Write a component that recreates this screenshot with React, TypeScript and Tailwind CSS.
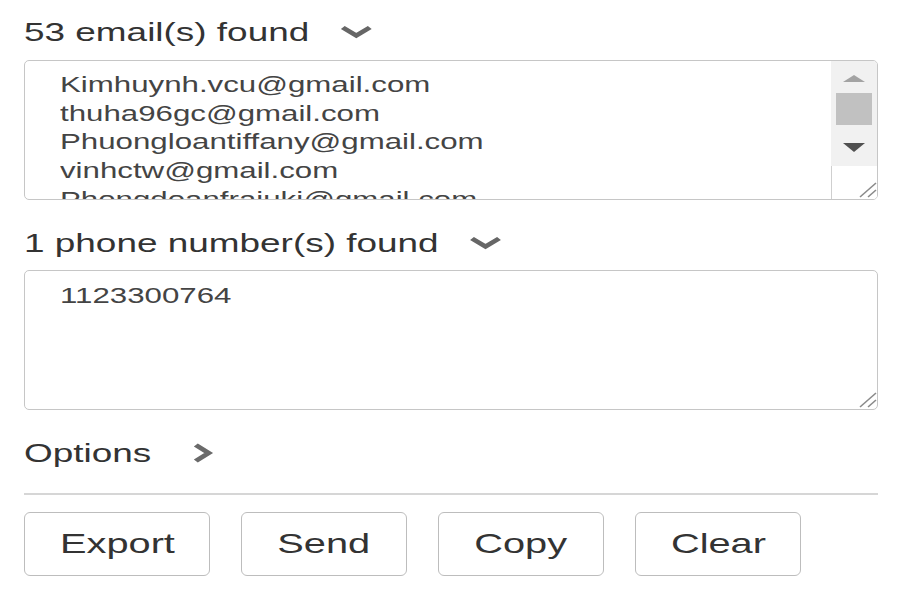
import React from "react";

const emails = [
  "Kimhuynh.vcu@gmail.com",
  "thuha96gc@gmail.com",
  "Phuongloantiffany@gmail.com",
  "vinhctw@gmail.com",
  "Phongdoanfraiuki@gmail.com",
];

function ChevronDown() {
  return (
    <svg width="24" height="14" viewBox="0 0 24 14" className="block">
      <polyline points="2.5,2.5 12,10.5 21.5,2.5" fill="none" stroke="#666" strokeWidth="4.2" strokeLinejoin="miter" />
    </svg>
  );
}

function ChevronRight() {
  return (
    <svg width="16" height="22" viewBox="0 0 16 22" className="block">
      <polyline points="3,3 12,11 3,19" fill="none" stroke="#6a6a6a" strokeWidth="4.2" strokeLinejoin="miter" />
    </svg>
  );
}

function Grip() {
  return (
    <svg width="22" height="20" viewBox="0 0 22 20" className="block">
      <line x1="21" y1="4" x2="5" y2="18" stroke="#8a8a8a" strokeWidth="1.6" />
      <line x1="21" y1="11" x2="13" y2="18" stroke="#8a8a8a" strokeWidth="1.6" />
    </svg>
  );
}

function Heading({ text }: { text: string }) {
  return (
    <div className="h-[36px] flex items-center">
      <span className="inline-flex items-center gap-[21px] origin-left scale-x-[1.42] text-[26px] leading-none text-[#333]">
        <span>{text}</span>
        <ChevronDown />
      </span>
    </div>
  );
}

function Line({ text }: { text: string }) {
  return (
    <div className="h-[28.7px] leading-[28.7px] whitespace-nowrap">
      <span className="inline-block origin-left scale-x-[1.42] text-[22px] text-[#444]">{text}</span>
    </div>
  );
}

function Btn({ label, w }: { label: string; w: string }) {
  return (
    <button className={`${w} h-[64px] border border-[#bdbdbd] rounded-[6px] bg-white flex items-center justify-center`}>
      <span className="inline-block origin-center scale-x-[1.42] text-[28px] leading-none text-[#333]">{label}</span>
    </button>
  );
}

export default function App() {
  return (
    <div className="w-[900px] h-[603px] bg-white overflow-hidden pl-[24px] pt-[14px] font-['Liberation_Sans',Arial,sans-serif]">
      <div className="w-[854px] flex flex-col">
        <Heading text="53 email(s) found" />

        <div className="mt-[10px] h-[140px] border border-[#c6c6c6] rounded-[5px] flex overflow-hidden">
          <div className="flex-1 pl-[35px] pt-[10px] overflow-hidden">
            {emails.map((e) => (
              <Line key={e} text={e} />
            ))}
          </div>
          <div className="w-[46px] flex flex-col">
            <div className="h-[105px] bg-[#f1f1f1] flex flex-col items-center pt-[14px]">
              <svg width="22" height="7" viewBox="0 0 22 7" className="block">
                <polygon points="11,0 22,7 0,7" fill="#a3a3a3" />
              </svg>
              <div className="mt-[11px] w-[36px] h-[32px] bg-[#c1c1c1]" />
              <svg width="22" height="9" viewBox="0 0 22 9" className="block mt-[18px]">
                <polygon points="0,0 22,0 11,9" fill="#505050" />
              </svg>
            </div>
            <div className="flex-1 bg-white border-l border-[#cfcfcf] flex items-end justify-end">
              <Grip />
            </div>
          </div>
        </div>

        <div className="mt-[25px]">
          <Heading text="1 phone number(s) found" />
        </div>

        <div className="mt-[9px] h-[140px] border border-[#c6c6c6] rounded-[5px] flex flex-col pl-[35px] pt-[11px]">
          <Line text="1123300764" />
          <div className="flex-1" />
          <div className="flex justify-end">
            <Grip />
          </div>
        </div>

        <div className="mt-[25px] h-[36px] flex items-center">
          <span className="inline-flex items-center gap-[28px] origin-left scale-x-[1.42] text-[26px] leading-none text-[#333]">
            <span>Options</span>
            <ChevronRight />
          </span>
        </div>

        <div className="mt-[22px] h-[2px] bg-[#d6d6d6]" />

        <div className="mt-[17px] flex gap-[31px]">
          <Btn label="Export" w="w-[186px]" />
          <Btn label="Send" w="w-[166px]" />
          <Btn label="Copy" w="w-[166px]" />
          <Btn label="Clear" w="w-[166px]" />
        </div>
      </div>
    </div>
  );
}
